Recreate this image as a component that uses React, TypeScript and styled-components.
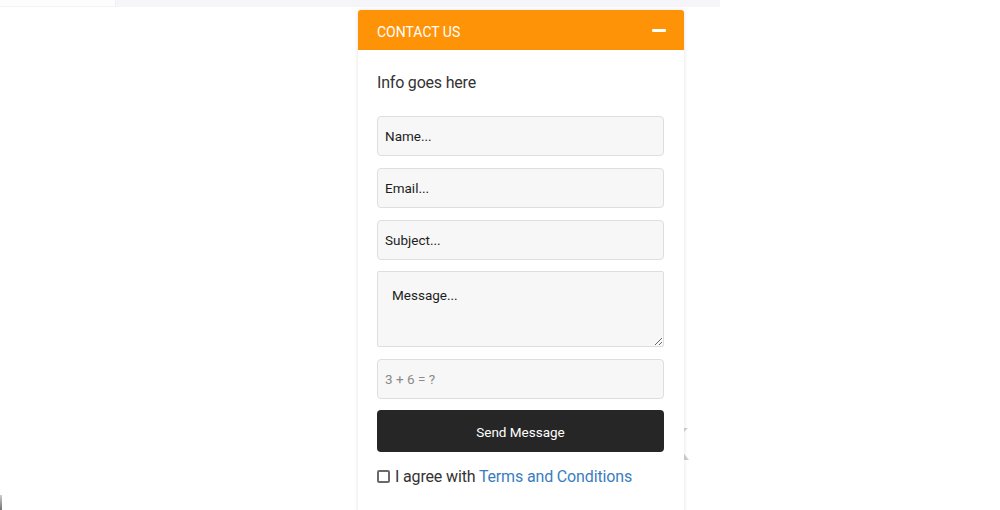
import styled, { createGlobalStyle } from "styled-components";

const GlobalStyle = createGlobalStyle`
  html, body {
    margin: 0;
    padding: 0;
    background: #fff;
    font-family: Roboto, "Liberation Sans", sans-serif;
    color: #333;
    overflow: hidden;
  }
`;

const App = () => {
  return (
    <Page>
      <GlobalStyle />
      <TopStrip>
        <div className="left" />
        <div className="mid" />
      </TopStrip>
      <Stage>
        <GhostLetter>K</GhostLetter>
        <EdgeMark />
        <Panel>
          <PanelHeader>
            <span>CONTACT US</span>
            <MinusIcon />
          </PanelHeader>
          <PanelBody>
            <Info>Info goes here</Info>
            <Form onSubmit={(e) => e.preventDefault()}>
              <Field placeholder="Name..." />
              <Field placeholder="Email..." />
              <Field placeholder="Subject..." />
              <MessageArea placeholder="Message..." />
              <Field placeholder="3 + 6 = ?" $muted />
              <SendButton type="submit">Send Message</SendButton>
              <Agree>
                <Box type="checkbox" />
                <span>
                  I agree with <a href="#">Terms and Conditions</a>
                </span>
              </Agree>
            </Form>
          </PanelBody>
        </Panel>
      </Stage>
    </Page>
  );
};

export default App;

const Page = styled.div`
  width: 1000px;
  height: 510px;
  position: relative;
  overflow: hidden;
`;

const TopStrip = styled.div`
  display: flex;
  height: 7px;

  .left {
    width: 115px;
    background: #fdfdfd;
    border-right: 1px solid #f0f0f2;
    border-bottom: 1px solid #f3f3f5;
  }

  .mid {
    width: 604px;
    background: #f6f6fa;
  }
`;

const Stage = styled.div`
  position: relative;
  padding: 3px 0 0 358px;
`;

const GhostLetter = styled.div`
  position: absolute;
  left: 656px;
  top: 414px;
  font-family: "Liberation Sans", sans-serif;
  font-size: 46px;
  font-weight: 700;
  color: #cfcfcf;
  line-height: 1;
`;

const EdgeMark = styled.div`
  position: absolute;
  left: 0;
  top: 488px;
  width: 2px;
  height: 20px;
  background: linear-gradient(#ccc, #555);
`;

const Panel = styled.div`
  position: relative;
  width: 326px;
  height: 520px;
  background: #fff;
  border-radius: 3px 3px 0 0;
  box-shadow: 0 0 4px rgba(0, 0, 0, 0.12);
`;

const PanelHeader = styled.div`
  box-sizing: border-box;
  display: flex;
  align-items: center;
  justify-content: space-between;
  height: 40px;
  padding: 4px 18px 0 19px;
  background: #ff9307;
  border-radius: 3px 3px 0 0;
  color: #fff;
  font-size: 14px;
`;

const MinusIcon = styled.span`
  display: block;
  width: 14px;
  height: 2.5px;
  margin-top: -3px;
  background: #fff;
  border-radius: 1px;
`;

const PanelBody = styled.div`
  padding: 23px 19px 0;
`;

const Info = styled.p`
  margin: 0 0 24px;
  font-size: 16px;
  line-height: 19px;
  letter-spacing: -0.2px;
  color: #333;
`;

const Form = styled.form`
  display: flex;
  flex-direction: column;
  gap: 12px;
`;

const Field = styled.input<{ $muted?: boolean }>`
  box-sizing: border-box;
  width: 287px;
  height: 40px;
  padding: 0 7px;
  background: #f7f7f7;
  border: 1px solid #dedede;
  border-radius: 4px;
  font-family: inherit;
  font-size: 13.5px;
  outline: none;

  &::placeholder {
    color: ${(p) => (p.$muted ? "#8a8a8a" : "#1d1d1d")};
  }
`;

const MessageArea = styled.textarea`
  box-sizing: border-box;
  width: 287px;
  height: 76px;
  margin-top: -1px;
  padding: 15px 14px;
  background: #f7f7f7;
  border: 1px solid #dedede;
  border-radius: 2px;
  font-family: inherit;
  font-size: 13.5px;
  resize: vertical;
  outline: none;

  &::placeholder {
    color: #1d1d1d;
  }
`;

const SendButton = styled.button`
  width: 287px;
  height: 42px;
  margin-top: -1px;
  padding-top: 2px;
  background: #262626;
  color: #fff;
  border: none;
  border-radius: 4px;
  font-family: inherit;
  font-size: 13.5px;
  cursor: pointer;
`;

const Agree = styled.label`
  display: flex;
  align-items: center;
  gap: 5px;
  margin-top: 3px;
  font-size: 16px;
  letter-spacing: -0.15px;
  color: #333;

  a {
    color: #3a7dbf;
    text-decoration: none;
  }
`;

const Box = styled.input`
  appearance: none;
  box-sizing: border-box;
  width: 13px;
  height: 13px;
  margin: 0;
  border: 2px solid #6a6a6a;
  border-radius: 2px;
  background: #fff;
`;
